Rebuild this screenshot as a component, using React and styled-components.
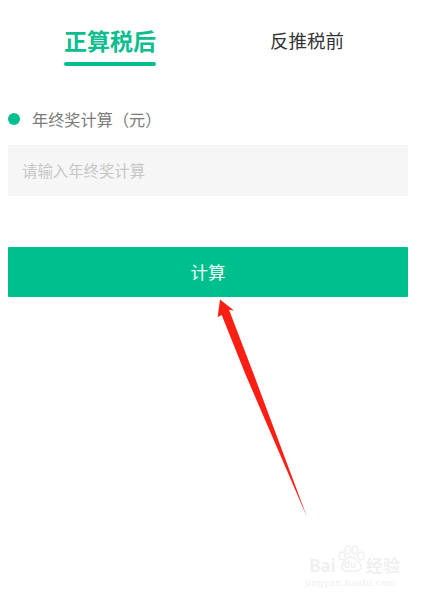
import styled, { createGlobalStyle } from 'styled-components';

const GlobalStyle = createGlobalStyle`
  html, body {
    margin: 0;
    padding: 0;
    background: #fff;
  }
  body {
    font-family: "Noto Sans CJK SC", "Noto Sans", sans-serif;
  }
`;

const Page = styled.div`
  position: relative;
  width: 425px;
  height: 599px;
  overflow: hidden;
  background: #fff;
`;

const Tabs = styled.div`
  display: flex;
  align-items: flex-start;
  height: 113px;
  padding: 23px 0 0 64px;
  box-sizing: border-box;
  gap: 114px;
`;

const Tab = styled.div`
  display: flex;
  flex-direction: column;
  font-size: ${p => (p.$active ? '23px' : '18.5px')};
  font-weight: ${p => (p.$active ? 700 : 400)};
  line-height: 34px;
  color: ${p => (p.$active ? '#0dbd8e' : '#333')};
  white-space: nowrap;
`;

const TabLine = styled.span`
  height: 4px;
  margin-top: 5px;
  border-radius: 2px;
  background: #00bf8f;
`;

const Form = styled.div`
  display: flex;
  flex-direction: column;
  width: 400px;
  margin-left: 8px;
`;

const Label = styled.div`
  display: flex;
  align-items: center;
  gap: 12px;
  height: 12px;
  margin-bottom: 20px;
  font-size: 16.2px;
  color: #7a7a7a;
  white-space: nowrap;
`;

const Dot = styled.span`
  width: 12px;
  height: 12px;
  border-radius: 50%;
  background: #00bf8f;
`;

const Input = styled.div`
  display: flex;
  align-items: center;
  height: 51px;
  padding: 0 0 2px 14px;
  box-sizing: border-box;
  margin-bottom: 51px;
  font-size: 15.4px;
  color: #c6c6c6;
  background: #f6f6f6;
`;

const Button = styled.div`
  display: flex;
  align-items: center;
  justify-content: center;
  height: 50px;
  padding-bottom: 2px;
  box-sizing: border-box;
  font-size: 17.5px;
  color: #f4fffb;
  background: #00bf8f;
  border-radius: 1px;
`;

const Arrow = styled.svg`
  position: absolute;
  top: 0;
  left: 0;
  pointer-events: none;
`;

const Watermark = styled.div`
  position: absolute;
  left: 309px;
  top: 545px;
  color: #f0f0f0;
  line-height: 1;
`;

const MarkTop = styled.div`
  display: flex;
  align-items: flex-end;
  gap: 1px;
  font-size: 17px;
  font-weight: 700;
  white-space: nowrap;
`;

const Paw = styled.div`
  position: relative;
  display: flex;
  width: 28px;
  height: 28px;
`;

const PawText = styled.span`
  position: absolute;
  left: 7px;
  bottom: 3px;
  font-family: "Liberation Sans", sans-serif;
  font-size: 10px;
  font-weight: 700;
`;

const MarkUrl = styled.div`
  margin: 5px 0 0 -4px;
  font-family: "DejaVu Serif", serif;
  font-size: 9.8px;
  white-space: nowrap;
`;

export default function App() {
  return (
    <Page>
      <GlobalStyle />
      <Tabs>
        <Tab $active>
          正算税后
          <TabLine />
        </Tab>
        <Tab>反推税前</Tab>
      </Tabs>
      <Form>
        <Label>
          <Dot />
          年终奖计算（元）
        </Label>
        <Input>请输入年终奖计算</Input>
        <Button>计算</Button>
      </Form>
      <Arrow width="425" height="599" viewBox="0 0 425 599">
        <path
          d="M220 299.5 L234 310.5 L229 309.7 L254 375 L307 517 L245.7 375 L221.7 315 L217.7 317 Z"
          fill="#fe1f14"
        />
      </Arrow>
      <Watermark>
        <MarkTop>
          Bai
          <Paw>
            <svg width="28" height="28" viewBox="0 0 28 28" fill="none" stroke="#f0f0f0" strokeWidth="1.5">
              <ellipse cx="5" cy="11" rx="3" ry="4" />
              <ellipse cx="11" cy="5" rx="3" ry="4" />
              <ellipse cx="18" cy="5" rx="3" ry="4" />
              <ellipse cx="24" cy="11" rx="3" ry="4" />
              <path d="M14 12 C10 12 4 19 5 23 C6 27 11 26 14 26 C17 26 23 27 24 23 C25 19 18 12 14 12 Z" />
            </svg>
            <PawText>du</PawText>
          </Paw>
          经验
        </MarkTop>
        <MarkUrl>jingyan.baidu.com</MarkUrl>
      </Watermark>
    </Page>
  );
}
